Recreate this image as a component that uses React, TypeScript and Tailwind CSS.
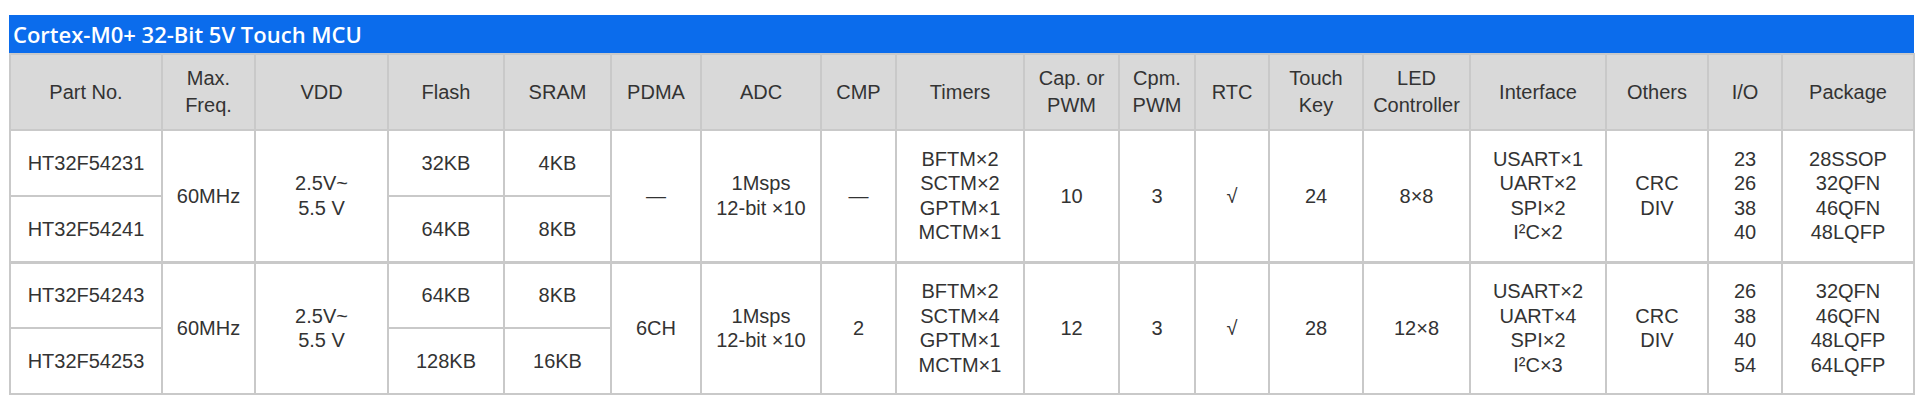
import React from "react";

type Group = {
  parts: string[];
  freq: string;
  vdd: string[];
  flash: string[];
  sram: string[];
  pdma: string;
  adc: string[];
  cmp: string;
  timers: string[];
  cap: string;
  cpm: string;
  rtc: string;
  touch: string;
  led: string;
  iface: string[];
  others: string[];
  io: string[];
  pkg: string[];
};

const widths = [152, 93, 133, 116, 107, 90, 120, 75, 128, 95, 76, 74, 94, 107, 136, 102, 74, 132];

const headers: string[][] = [
  ["Part No."],
  ["Max.", "Freq."],
  ["VDD"],
  ["Flash"],
  ["SRAM"],
  ["PDMA"],
  ["ADC"],
  ["CMP"],
  ["Timers"],
  ["Cap. or", "PWM"],
  ["Cpm.", "PWM"],
  ["RTC"],
  ["Touch", "Key"],
  ["LED", "Controller"],
  ["Interface"],
  ["Others"],
  ["I/O"],
  ["Package"],
];

const groups: Group[] = [
  {
    parts: ["HT32F54231", "HT32F54241"],
    freq: "60MHz",
    vdd: ["2.5V~", "5.5 V"],
    flash: ["32KB", "64KB"],
    sram: ["4KB", "8KB"],
    pdma: "—",
    adc: ["1Msps", "12-bit ×10"],
    cmp: "—",
    timers: ["BFTM×2", "SCTM×2", "GPTM×1", "MCTM×1"],
    cap: "10",
    cpm: "3",
    rtc: "√",
    touch: "24",
    led: "8×8",
    iface: ["USART×1", "UART×2", "SPI×2", "I²C×2"],
    others: ["CRC", "DIV"],
    io: ["23", "26", "38", "40"],
    pkg: ["28SSOP", "32QFN", "46QFN", "48LQFP"],
  },
  {
    parts: ["HT32F54243", "HT32F54253"],
    freq: "60MHz",
    vdd: ["2.5V~", "5.5 V"],
    flash: ["64KB", "128KB"],
    sram: ["8KB", "16KB"],
    pdma: "6CH",
    adc: ["1Msps", "12-bit ×10"],
    cmp: "2",
    timers: ["BFTM×2", "SCTM×4", "GPTM×1", "MCTM×1"],
    cap: "12",
    cpm: "3",
    rtc: "√",
    touch: "28",
    led: "12×8",
    iface: ["USART×2", "UART×4", "SPI×2", "I²C×3"],
    others: ["CRC", "DIV"],
    io: ["26", "38", "40", "54"],
    pkg: ["32QFN", "46QFN", "48LQFP", "64LQFP"],
  },
];

function Lines({ items }: { items: string[] }) {
  return (
    <>
      {items.map((t, i) => (
        <div key={i}>{t}</div>
      ))}
    </>
  );
}

export default function App() {
  const cell = "border-2 border-[#c9c9c9] text-center align-middle p-0";

  return (
    <div className="min-h-screen bg-white pt-[15px] pl-[9px]" style={{ fontFamily: '"Liberation Sans", Arial, sans-serif' }}>
      <div className="w-[1905px]">
        {/* Title bar */}
        <div className="h-[38px] bg-[#0b6cec] flex items-center pl-[4px]">
          <span className="text-white text-[22px] font-semibold" style={{ fontFamily: '"Open Sans", sans-serif' }}>
            Cortex-M0+ 32-Bit 5V Touch MCU
          </span>
        </div>

        <table className="w-[1905px] table-fixed border-collapse border-2 border-[#c9c9c9] text-[20px] text-[#333333]">
          <colgroup>
            {widths.map((w, i) => (
              <col key={i} style={{ width: w }} />
            ))}
          </colgroup>
          <thead>
            <tr className="h-[76px] bg-[#d9d9d9]">
              {headers.map((h, i) => (
                <th key={i} className={`${cell} font-normal leading-[27px]`}>
                  <Lines items={h} />
                </th>
              ))}
            </tr>
          </thead>
          <tbody className="leading-[24.5px]">
            {groups.map((g, gi) => {
              const top = gi > 0 ? "border-t-[3px]" : "";
              return (
                <React.Fragment key={gi}>
                  <tr className="h-[66px]">
                    <td className={`${cell} ${top}`}>{g.parts[0]}</td>
                    <td rowSpan={2} className={`${cell} ${top}`}>{g.freq}</td>
                    <td rowSpan={2} className={`${cell} ${top}`}>
                      <Lines items={g.vdd} />
                    </td>
                    <td className={`${cell} ${top}`}>{g.flash[0]}</td>
                    <td className={`${cell} ${top}`}>{g.sram[0]}</td>
                    <td rowSpan={2} className={`${cell} ${top}`}>{g.pdma}</td>
                    <td rowSpan={2} className={`${cell} ${top}`}>
                      <Lines items={g.adc} />
                    </td>
                    <td rowSpan={2} className={`${cell} ${top}`}>{g.cmp}</td>
                    <td rowSpan={2} className={`${cell} ${top}`}>
                      <Lines items={g.timers} />
                    </td>
                    <td rowSpan={2} className={`${cell} ${top}`}>{g.cap}</td>
                    <td rowSpan={2} className={`${cell} ${top}`}>{g.cpm}</td>
                    <td rowSpan={2} className={`${cell} ${top}`}>{g.rtc}</td>
                    <td rowSpan={2} className={`${cell} ${top}`}>{g.touch}</td>
                    <td rowSpan={2} className={`${cell} ${top}`}>{g.led}</td>
                    <td rowSpan={2} className={`${cell} ${top}`}>
                      <Lines items={g.iface} />
                    </td>
                    <td rowSpan={2} className={`${cell} ${top}`}>
                      <Lines items={g.others} />
                    </td>
                    <td rowSpan={2} className={`${cell} ${top}`}>
                      <Lines items={g.io} />
                    </td>
                    <td rowSpan={2} className={`${cell} ${top}`}>
                      <Lines items={g.pkg} />
                    </td>
                  </tr>
                  <tr className="h-[66px]">
                    <td className={cell}>{g.parts[1]}</td>
                    <td className={cell}>{g.flash[1]}</td>
                    <td className={cell}>{g.sram[1]}</td>
                  </tr>
                </React.Fragment>
              );
            })}
          </tbody>
        </table>
      </div>
    </div>
  );
}
